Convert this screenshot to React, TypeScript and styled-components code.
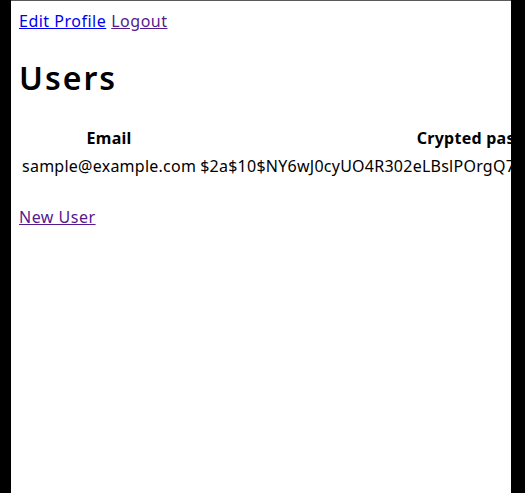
import React from 'react';
import styled, { createGlobalStyle } from 'styled-components';

const GlobalStyle = createGlobalStyle`
  html, body {
    margin: 0;
    padding: 0;
    background: #000;
    height: 100%;
  }
  #root {
    height: 100%;
  }
`;

const Frame = styled.div`
  margin-left: 11px;
  width: 500px;
  height: 100%;
  box-sizing: border-box;
  background: #fff;
  border-top: 1px solid #5a5a5a;
  overflow: hidden;
  font-family: 'Noto Sans', 'Liberation Sans', sans-serif;
  font-size: 16px;
  line-height: 1.5;
  letter-spacing: 0.25px;
  color: #000;
`;

const Page = styled.div`
  padding: 8px;
  width: max-content;
`;

const Nav = styled.div`
  display: flex;
  gap: 5px;
  letter-spacing: 0.5px;
`;

const NavLink = styled.a<{ $visited?: boolean }>`
  color: ${(p) => (p.$visited ? '#551a8b' : '#0000ee')};
  text-decoration: underline;
`;

const Title = styled.h1`
  font-size: 32px;
  font-weight: 600;
  line-height: 1.5;
  letter-spacing: 2px;
  margin: 21px 0;
`;

const Table = styled.table`
  border-spacing: 2px;
`;

const Th = styled.th`
  padding: 1px;
  font-weight: 700;
  text-align: center;
`;

const Td = styled.td`
  padding: 1px;
`;

const Footer = styled.div`
  margin-top: 24px;
  letter-spacing: 0.5px;
`;

const users = [
  {
    email: 'sample@example.com',
    crypted: '$2a$10$NY6wJ0cyUO4R302eLBslPOrgQ7c1mZk9yWqXhT3vE5bLdFsA8nGpu',
    salt: 'xK3pQ8sVn2LmR7tYwZ9a',
  },
];

const App: React.FC = () => {
  return (
    <>
      <GlobalStyle />
      <Frame>
        <Page>
          <Nav>
            <NavLink href="#">Edit Profile</NavLink>
            <NavLink href="#" $visited>
              Logout
            </NavLink>
          </Nav>
          <Title>Users</Title>
          <Table>
            <thead>
              <tr>
                <Th>Email</Th>
                <Th>Crypted password</Th>
                <Th>Salt</Th>
                <Th colSpan={3}></Th>
              </tr>
            </thead>
            <tbody>
              {users.map((u) => (
                <tr key={u.email}>
                  <Td>{u.email}</Td>
                  <Td>{u.crypted}</Td>
                  <Td>{u.salt}</Td>
                  <Td>
                    <NavLink href="#">Show</NavLink>
                  </Td>
                  <Td>
                    <NavLink href="#">Edit</NavLink>
                  </Td>
                  <Td>
                    <NavLink href="#">Destroy</NavLink>
                  </Td>
                </tr>
              ))}
            </tbody>
          </Table>
          <Footer>
            <NavLink href="#" $visited>
              New User
            </NavLink>
          </Footer>
        </Page>
      </Frame>
    </>
  );
};

export default App;
